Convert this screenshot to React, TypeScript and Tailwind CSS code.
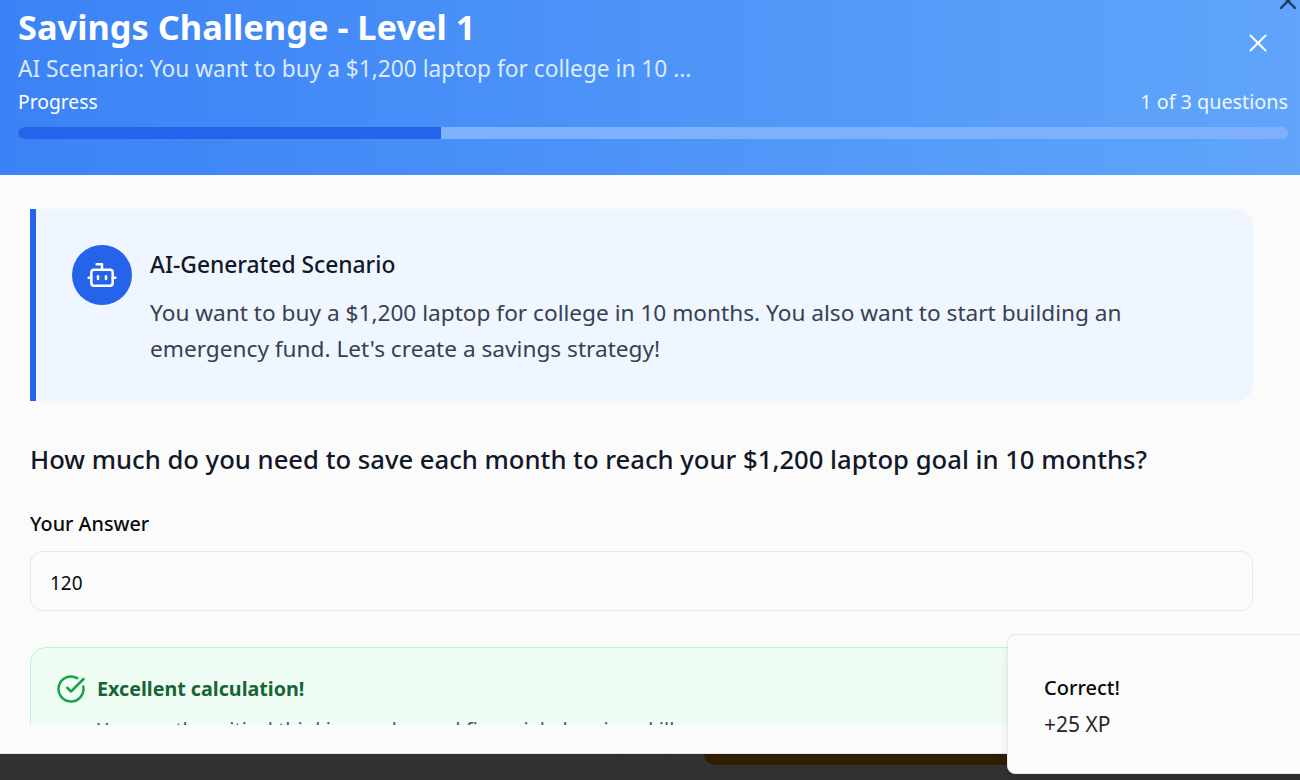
import { Bot, CircleCheckBig, X } from "lucide-react";

function Header() {
  return (
    <div className="h-[175px] shrink-0 bg-gradient-to-r from-[#3b82f6] to-[#60a5fa] pr-3 pl-[18px] text-white">
      <h2 className="pt-[5px] text-[34.4px] leading-[44px] font-bold">Savings Challenge - Level 1</h2>
      <p className="mt-[3px] text-[22.7px] leading-[34px] text-[#dbeafe]">
        AI Scenario: You want to buy a $1,200 laptop for college in 10 ...
      </p>
      <div className="flex justify-between pt-[2px] leading-[28px]">
        <span className="text-[19.3px]">Progress</span>
        <span className="text-[19.8px] text-[#eff6ff]">1 of 3 questions</span>
      </div>
      <div className="mt-[11px] h-3 overflow-hidden rounded-full bg-[#7fb0fc]">
        <div className="h-full w-1/3 bg-[#2563eb]" />
      </div>
    </div>
  );
}

function ScenarioCard() {
  return (
    <div className="flex gap-[18px] rounded-r-2xl border-l-[6px] border-[#2563eb] bg-[#eff6ff] pt-9 pr-9 pb-[34px] pl-9">
      <div className="flex size-[60px] shrink-0 items-center justify-center rounded-full bg-[#2563eb] text-white">
        <Bot size={32} strokeWidth={1.9} />
      </div>
      <div>
        <h3 className="text-[22.8px] leading-[40px] font-medium text-[#111827]">AI-Generated Scenario</h3>
        <p className="mt-[10px] text-[22.65px] leading-[36px] text-[#374151]">
          You want to buy a $1,200 laptop for college in 10 months. You also want to start building an
          <br />
          emergency fund. Let's create a savings strategy!
        </p>
      </div>
    </div>
  );
}

function Body() {
  return (
    <div className="h-[550px] overflow-hidden pt-[34px] pr-[47px] pl-[30px]">
      <ScenarioCard />
      <h3 className="mt-[38px] text-[25.65px] leading-[42px] font-medium whitespace-nowrap text-[#111827]">
        How much do you need to save each month to reach your $1,200 laptop goal in 10 months?
      </h3>
      <label className="mt-[29px] block text-[19.8px] leading-[28px] font-medium text-[#0a0a0a]">Your Answer</label>
      <div className="mt-[13px] flex h-[60px] items-center rounded-xl border border-[#e5e7eb] px-[19px] pt-1 text-[19px] text-[#0a0a0a]">
        120
      </div>
      <div className="mt-9 rounded-2xl border border-[#bbf7d0] bg-[#f0fdf4] pt-[26px] pl-[25px]">
        <div className="flex items-center gap-[11px]">
          <CircleCheckBig size={30} strokeWidth={2} className="text-[#16a34a]" />
          <span className="text-[19.7px] leading-[28px] font-bold text-[#166534]">Excellent calculation!</span>
        </div>
        <p className="mt-[12px] pl-[41px] text-[20px] leading-[28px] whitespace-nowrap text-[#4b5563]">
          You use the critical thinking and sound financial planning skills
        </p>
      </div>
    </div>
  );
}

export default function App() {
  return (
    <div className="relative h-[780px] w-[1300px] overflow-hidden bg-[#323232] font-['Noto_Sans',sans-serif]">
      <div className="h-[754px] border-b border-[#e5e7eb] bg-[#fbfbfc]">
        <Header />
        <Body />
      </div>
      <div className="flex h-[26px]">
        <div className="w-[620px] border-r border-[#2e2e2e]" />
        <div className="w-[48px] border-r border-[#2e2e2e]" />
        <div className="ml-[36px] h-[11px] w-[320px] rounded-bl-xl bg-[#2f1d04]" />
      </div>

      {/* dialog close buttons */}
      <X size={30} strokeWidth={1.6} className="absolute top-[28px] left-[1243px] text-white" />
      <X size={28} strokeWidth={2} className="absolute top-[-13px] left-[1274px] text-[#1e3a6a]" />

      {/* toast */}
      <div className="absolute top-[634px] left-[1007px] h-[140px] w-[310px] rounded-lg border border-[#e5e7eb] bg-[#fbfbfc] pt-[38px] pl-[36px] shadow-lg">
        <div className="text-[20px] leading-[30px] font-medium text-[#0a0a0a]">Correct!</div>
        <div className="mt-[6px] text-[21px] leading-[30px] text-[#27272a]">+25 XP</div>
      </div>
    </div>
  );
}
